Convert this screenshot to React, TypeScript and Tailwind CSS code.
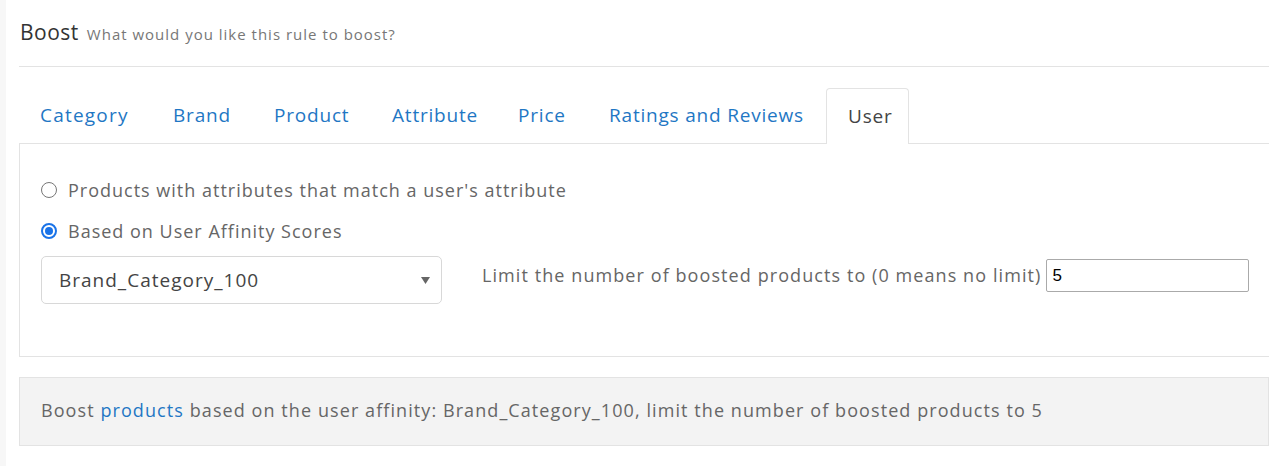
import React from "react";

const tabs = [
  { label: "Category", w: "w-[133px]", t: "tracking-[1.2px]" },
  { label: "Brand", w: "w-[101px]", t: "tracking-[0.8px]" },
  { label: "Product", w: "w-[118px]", t: "tracking-[0.8px]" },
  { label: "Attribute", w: "w-[126px]", t: "tracking-[0.8px]" },
  { label: "Price", w: "w-[91px]", t: "tracking-[0.8px]" },
  { label: "Ratings and Reviews", w: "w-[238px]", t: "tracking-[0.8px]" },
];

export default function App() {
  return (
    <div
      className="flex w-[1269px] h-[466px] overflow-hidden bg-white"
      style={{ fontFamily: '"Open Sans", "Noto Sans", sans-serif' }}
    >
      <div className="w-[6px] shrink-0 bg-[#f7f7f7]" />
      <div className="flex-1 pl-[13px] min-w-0">
        <div className="h-[67px] border-b border-[#e3e3e3] flex items-start pt-[17px]">
          <span className="text-[21px] leading-[30px] tracking-[0.5px] text-[#333] ml-[1px]">Boost</span>
          <span className="text-[15px] leading-[30px] tracking-[1px] text-[#777] ml-[8px] pt-[2px]">
            What would you like this rule to boost?
          </span>
        </div>
        <div className="mt-[21px] flex items-end border-b border-[#e3e3e3] h-[56px]">
          {tabs.map((t) => (
            <div
              key={t.label}
              className={`${t.w} ${t.t} h-[55px] pl-[21px] flex items-center text-[19px] text-[#1f77c4] whitespace-nowrap`}
            >
              {t.label}
            </div>
          ))}
          <div className="w-[83px] h-[56px] -mb-px pl-[21px] flex items-center text-[19px] tracking-[0.8px] text-[#444] bg-white border border-b-0 border-[#e3e3e3] rounded-t-[4px]">
            User
          </div>
        </div>
        <div className="h-[213px] border-l border-b border-[#e3e3e3] pl-[21px] pt-[35px]">
          <label className="flex items-center h-[22px] text-[18px] tracking-[1px] text-[#666]">
            <span className="w-[16px] h-[16px] rounded-full border border-[#777] bg-white" />
            <span className="ml-[11px]">Products with attributes that match a user's attribute</span>
          </label>
          <label className="flex items-center h-[22px] mt-[19px] text-[18px] tracking-[1px] text-[#666]">
            <span className="w-[16px] h-[16px] rounded-full border-2 border-[#1a73e8] flex items-center justify-center">
              <span className="w-[8px] h-[8px] rounded-full bg-[#1a73e8]" />
            </span>
            <span className="ml-[11px]">Based on User Affinity Scores</span>
          </label>
          <div className="flex items-start mt-[14px]">
            <div className="w-[401px] h-[48px] border border-[#d8d8d8] rounded-[5px] flex items-center pl-[17px] pr-[10px] text-[19px] tracking-[1px] text-[#444]">
              <span className="flex-1">Brand_Category_100</span>
              <svg width="9" height="7" viewBox="0 0 9 7" className="mr-[1px]">
                <path d="M0 0 L9 0 L4.5 7 Z" fill="#666" />
              </svg>
            </div>
            <div className="flex items-center ml-[40px] mt-[3px] h-[33px]">
              <span className="text-[18px] tracking-[1.08px] text-[#666] whitespace-nowrap">
                Limit the number of boosted products to (0 means no limit)
              </span>
              <div
                className="ml-[5px] w-[203px] h-[33px] border border-[#aaa] rounded-[2px] flex items-center pl-[5px] text-[17px] text-black"
                style={{ fontFamily: '"Liberation Sans", Arial, sans-serif' }}
              >
                5
              </div>
            </div>
          </div>
        </div>
        <div className="mt-[20px] h-[69px] bg-[#f3f3f3] border border-[#e3e3e3] pl-[21px] flex items-center text-[18px] tracking-[1.08px] text-[#666] whitespace-nowrap">
          <span className="-mt-[3px]">
            Boost <span className="text-[#1f77c4]">products</span> based on the user affinity: Brand_Category_100, limit the number of boosted products to 5
          </span>
        </div>
      </div>
    </div>
  );
}
